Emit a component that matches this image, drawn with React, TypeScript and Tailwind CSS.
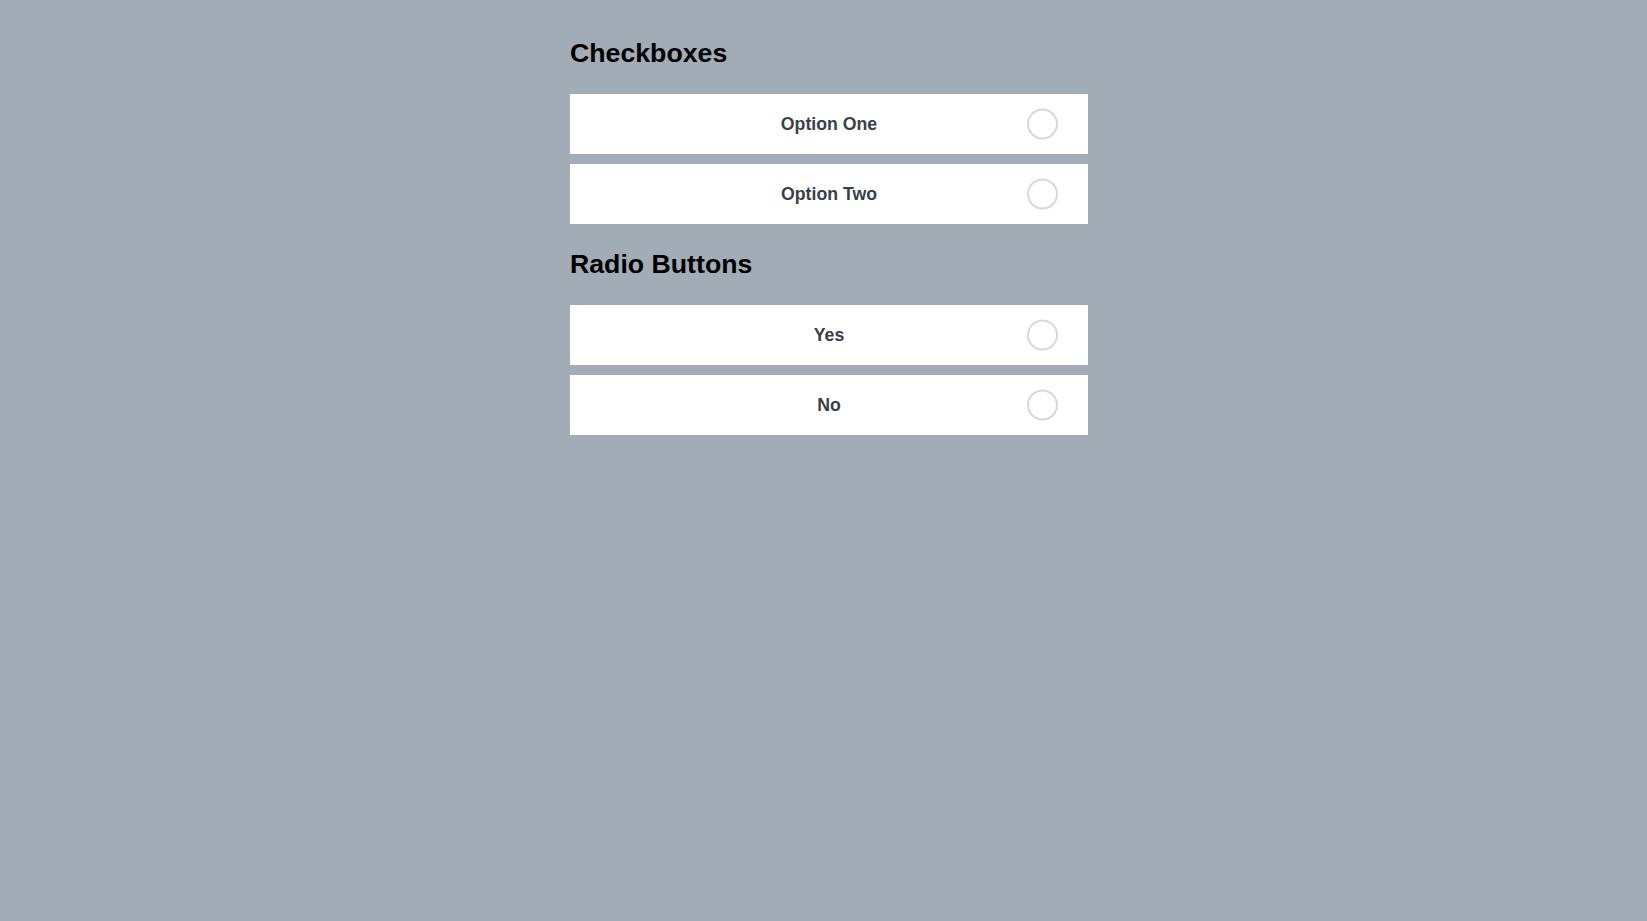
const CHECKBOXES = ['Option One', 'Option Two']
const RADIOS = ['Yes', 'No']

function OptionRow({ label }: { label: string }) {
  return (
    <label className="relative flex h-[60px] items-center justify-center bg-white cursor-pointer">
      <span className="text-[17.7px] font-bold text-[#3a3f47]">{label}</span>
      <span className="absolute right-[30px] top-1/2 -translate-y-1/2 h-[31px] w-[31px] rounded-full border-2 border-[#d6d8db]" />
    </label>
  )
}

function Section({ title, items, first }: { title: string; items: string[]; first?: boolean }) {
  return (
    <section className={first ? '' : 'mt-[25px]'}>
      <h2 className="text-[26.7px] font-bold leading-[31px] text-black">{title}</h2>
      <div className="mt-[25px] flex flex-col gap-[10px]">
        {items.map((item) => (
          <OptionRow key={item} label={item} />
        ))}
      </div>
    </section>
  )
}

export default function App() {
  return (
    <div className="min-h-screen bg-[#a2acb6] font-['Liberation_Sans',Arial,sans-serif]">
      <div className="mx-auto w-[529px] pl-[11px] pt-[38px]">
        <Section title="Checkboxes" items={CHECKBOXES} first />
        <Section title="Radio Buttons" items={RADIOS} />
      </div>
    </div>
  )
}
